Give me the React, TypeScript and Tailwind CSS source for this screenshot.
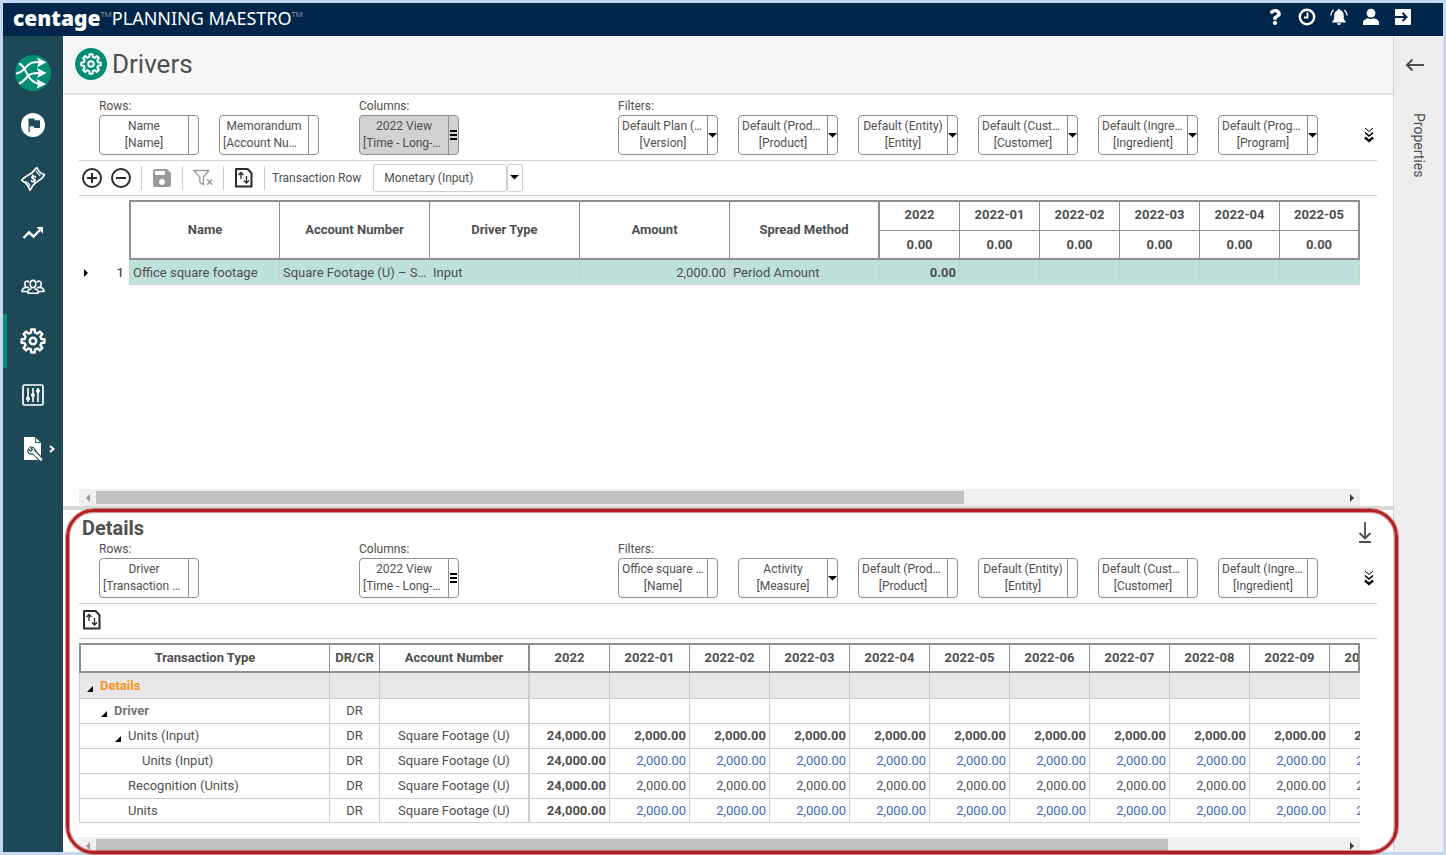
import React from "react";
import { FaQuestion } from "react-icons/fa";
import { MdSave } from "react-icons/md";

function ring(outer: number, inner: number, teeth: number, center: number) {
  const points: string[] = [];
  const step = 360 / teeth;
  for (let i = 0; i < teeth; i++) {
    const base = i * step - 90;
    const corners: [number, number][] = [
      [base - step * 0.3, inner],
      [base - step * 0.2, outer],
      [base + step * 0.2, outer],
      [base + step * 0.3, inner],
    ];
    corners.forEach(([deg, r]) => {
      const a = (deg * Math.PI) / 180;
      points.push(`${(center + r * Math.cos(a)).toFixed(2)} ${(center + r * Math.sin(a)).toFixed(2)}`);
    });
  }
  return `M${points.join("L")}Z`;
}

const gearPath = ring(10.7, 8, 8, 12);

function GearIcon({ className }: { className: string }) {
  return (
    <svg viewBox="0 0 24 24" className={className} fill="none" stroke="currentColor" strokeWidth="2.200" strokeLinejoin="round">
      <path d={gearPath} />
      <circle cx="12" cy="12" r="3" />
    </svg>
  );
}

function ShuffleIcon() {
  return (
    <svg viewBox="0 0 36 36" className="size-9">
      <circle cx="18" cy="18" r="18" fill="#048f74" />
      <g fill="none" stroke="#fff" strokeWidth="2">
        <path d="M4 8.500c5 2 6 7 8.500 11 2.500 5 6 9 13 9.500" />
        <path d="M1 18.500C9 18.500 11 8 19 7.300h7" />
        <path d="M4 28.500c5-1.500 6.500-5.500 10-8.500 3-2.200 7-2 12-2" />
      </g>
      <g fill="#fff">
        <path d="M22 2.500l9.500 4.800-9.500 5 2-5z" />
        <path d="M22 13l9.500 5-9.500 5 2-5z" />
        <path d="M21.500 24l9.500 5.300-9.500 4.200 2-4.500z" />
      </g>
    </svg>
  );
}

function FlagIcon() {
  return (
    <svg viewBox="0 0 24 24" className="size-6">
      <circle cx="12" cy="12" r="12" fill="#fff" />
      <path d="M7.500 5.500h6v1.700h5.500v7.800h-6v-1.700H8.700v6H7.500z" fill="#1d4858" />
    </svg>
  );
}

function BillIcon() {
  return (
    <svg viewBox="0 0 26 26" className="size-[26px]" fill="none" stroke="#fff" strokeWidth="1.700" strokeLinejoin="round" strokeLinecap="round">
      <path d="M1.800 14.500C3.500 9.500 11.500 9.500 15 3.500c.6-1.200 1.300-1.700 2-1.700.8 3 4.300 6 7.400 6.700-1.200 5.500-9.400 6.500-12.400 12.500-.6 1.500-1.400 2.700-2.300 3.200C9 20.500 5.500 16.500 1.800 14.500z" />
      <path d="M16.500 5.500c1 2 2 3 3.500 4M6 15.500c2 1 3.300 2.500 4 4.300" strokeWidth="1.200" />
      <path d="M15.500 11c-1-1.300-3.800-.8-3.700.8.100 1.500 3.300.7 3.500 2.300.2 1.500-2.800 2.300-4 .7M12.600 9.200l2.200 7.200" strokeWidth="1.500" />
    </svg>
  );
}

function TrendIcon() {
  return (
    <svg viewBox="0 0 22 14" className="h-3.5 w-[22px]">
      <path d="M1.500 12l5.500-5.500 4.500 4L18 4" fill="none" stroke="#fff" strokeWidth="2.400" />
      <path d="M14.500 1H21v6.500z" fill="#fff" />
    </svg>
  );
}

function PeopleIcon() {
  return (
    <svg viewBox="0 0 24 16" className="h-4 w-6" fill="none" stroke="#fff" strokeWidth="1.600">
      <ellipse cx="12" cy="5" rx="2.800" ry="3.600" />
      <path d="M6.500 14.300c-.2-3 1.500-4 4-4.800M17.500 14.300c.2-3-1.500-4-4-4.800M6.500 14.300h11" />
      <path d="M8 3.300C6.500 1.300 3.700 2 3.700 4.800c0 1.700.7 2.700 1.600 3.300C2.500 8.800 1 9.800 1 12.500h5M16 3.300c1.500-2 4.300-1.300 4.300 1.500 0 1.700-.7 2.700-1.600 3.300 2.800.7 4.300 1.700 4.300 4.400h-5M5.300 8.100c1 .2 2 .5 2.700 1M18.700 8.100c-1 .2-2 .5-2.700 1" />
    </svg>
  );
}

function SlidersIcon() {
  return (
    <svg viewBox="0 0 22 22" className="size-[22px]" fill="none" stroke="#fff">
      <rect x="1" y="1" width="20" height="20" rx="1.500" strokeWidth="1.700" />
      <path d="M6 4v14M11 4v14M16 4v14" strokeWidth="1.600" />
      <g fill="#fff" stroke="none">
        <circle cx="6" cy="14.500" r="2" />
        <circle cx="11" cy="11" r="2" />
        <circle cx="16" cy="7" r="2" />
      </g>
    </svg>
  );
}

function FileToolIcon() {
  return (
    <svg viewBox="0 0 20 26" className="h-[26px] w-5">
      <path d="M1 1h11l6 6v17H1z" fill="#fff" />
      <path d="M12.500 1.500v5h5" fill="none" stroke="#1d4858" strokeWidth="1" />
      <path d="M10.500 15.500L18 23.500" stroke="#1d4858" strokeWidth="4.800" strokeLinecap="round" />
      <path d="M5.500 13l2.300 2.200 1.700-1.700-2.300-2.300c2.500-.8 5.300 1.200 4.600 4.400-1 3-5 3.500-6.600.9-.5-1-.5-2.500.3-3.500z" fill="#fff" stroke="#1d4858" strokeWidth="1.200" />
      <path d="M10 15.500L18 23.500" stroke="#fff" strokeWidth="2.800" strokeLinecap="round" />
    </svg>
  );
}

function ClockIcon() {
  return (
    <svg viewBox="0 0 18 18" className="size-[18px]" fill="none" stroke="#fff">
      <circle cx="9" cy="9" r="7.200" strokeWidth="2.400" />
      <path d="M9.500 4.500V9.500H6" strokeWidth="1.800" />
    </svg>
  );
}

function BellIcon() {
  return (
    <svg viewBox="0 0 18 18" className="size-[18px]">
      <path d="M9 1c.8 0 1.300.5 1.300 1.200C12.800 2.900 13.700 5 13.700 7.500c0 3.500.6 4.700 2 6v1H2.300v-1c1.400-1.300 2-2.500 2-6 0-2.500.9-4.600 3.400-5.300C7.700 1.500 8.200 1 9 1zM7 15.300h4c0 1-.9 1.700-2 1.700s-2-.7-2-1.700z" fill="#fff" />
      <path d="M3.800 2C2 3.300 1 5 1 7.500M14.200 2C16 3.300 17 5 17 7.500" fill="none" stroke="#fff" strokeWidth="1.300" />
    </svg>
  );
}

function UserIcon() {
  return (
    <svg viewBox="0 0 18 18" className="size-[18px]" fill="#fff">
      <circle cx="9" cy="5.200" r="4.400" />
      <path d="M1 17v-2.500c0-2.300 3-4 5-4.300 1.800 1 4.200 1 6 0 2 .3 5 2 5 4.300V17z" />
    </svg>
  );
}

function ExitIcon() {
  return (
    <svg viewBox="0 0 18 18" className="size-[18px]">
      <rect x="1" y="1" width="16" height="16" rx="1" fill="#fff" />
      <path d="M0 9h12M8.500 5l4 4-4 4" fill="none" stroke="#00254a" strokeWidth="2" />
    </svg>
  );
}

function SwapFileIcon() {
  return (
    <svg viewBox="0 0 20 20" className="size-5" fill="none" stroke="#2b2b2b">
      <path d="M2 1h11.500l4 4V18.500H2z" strokeWidth="2" strokeLinejoin="round" />
      <path d="M7 11V4.500M4.500 7L7 4.500 9.500 7M12.500 8v7M10 12.500l2.500 2.500 2.500-2.500" strokeWidth="1.300" />
    </svg>
  );
}

function CircleIcon({ plus }: { plus: boolean }) {
  return (
    <svg viewBox="0 0 20 20" className="size-5" fill="none" stroke="#2b2b2b" strokeWidth="2">
      <circle cx="10" cy="10" r="9" />
      <path d={plus ? "M5 10h10M10 5v10" : "M5 10h10"} />
    </svg>
  );
}

function ClearFilterIcon() {
  return (
    <svg viewBox="0 0 22 20" className="h-5 w-[22px]" fill="none" stroke="#999">
      <path d="M1 1.700h16.500L11.500 9v8.500L7.500 14.500V9z" strokeWidth="1.500" strokeLinejoin="round" />
      <path d="M15.500 11.500l5.500 6M21 11.500l-5.500 6" strokeWidth="1.600" />
    </svg>
  );
}

function ChevronsIcon() {
  return (
    <svg viewBox="0 0 12 18" className="h-[18px] w-3" fill="none" stroke="#000">
      <path d="M2 2l4 3.500L10 2" strokeWidth="1" />
      <path d="M2 6.500L6 10l4-3.500" strokeWidth="1.600" />
      <path d="M2 11.500L6 15l4-3.500" strokeWidth="2.400" />
    </svg>
  );
}

function Caret() {
  return (
    <svg viewBox="0 0 10 5" className="h-[5px] w-2.5 shrink-0">
      <path d="M0 0h9L4.500 4.500z" fill="#000" />
    </svg>
  );
}

type Handle = "none" | "caret" | "bars";
type Dim = { title: string; field: string; handle: Handle; active?: boolean };

const dim = (title: string, field: string, handle: Handle = "none", active = false): Dim => ({ title, field, handle, active });

function DimLine({ text }: { text: string }) {
  return (
    <span className={`block whitespace-nowrap ${text.endsWith("…") ? "text-left" : "text-center"}`}>{text}</span>
  );
}

function DimBox({ item }: { item: Dim }) {
  return (
    <button
      type="button"
      className={`flex h-10 w-[100px] shrink-0 overflow-hidden rounded border border-[#8f8f8f] text-xs leading-[17px] ${item.active ? "bg-[#d2d2d2]" : "bg-white"}`}
    >
      <span className="flex h-full min-w-0 flex-1 flex-col px-[3px] pt-0.5">
        <DimLine text={item.title} />
        <DimLine text={item.field} />
      </span>
      <span className="flex h-full w-2.5 shrink-0 items-center justify-center border-l border-[#8f8f8f]">
        {item.handle === "caret" && <Caret />}
        {item.handle === "bars" && (
          <span className="flex flex-col gap-0.5">
            <span className="h-0.5 w-[7px] bg-black" />
            <span className="h-0.5 w-[7px] bg-black" />
            <span className="h-0.5 w-[7px] bg-black" />
          </span>
        )}
      </span>
    </button>
  );
}

function DimGroup({ label, items }: { label: string; items: Dim[] }) {
  return (
    <div>
      <div className="h-5 pt-0.5 text-xs leading-[18px]">{label}</div>
      <div className="flex gap-5">
        {items.map((item) => (
          <DimBox key={item.title + item.field} item={item} />
        ))}
      </div>
    </div>
  );
}

function PivotBar({ rows, columns, filters }: { rows: Dim[]; columns: Dim[]; filters: Dim[] }) {
  return (
    <div className="flex items-end border-b border-[#cfcfcf] pr-0.5 pb-[5px] pl-5">
      <div className="grid flex-1 grid-cols-[260px_259px_1fr]">
        <DimGroup label="Rows:" items={rows} />
        <DimGroup label="Columns:" items={columns} />
        <DimGroup label="Filters:" items={filters} />
      </div>
      <button type="button" aria-label="Expand" className="flex h-10 items-center">
        <ChevronsIcon />
      </button>
    </div>
  );
}

function ScrollBar({ thumb, clipped = false }: { thumb: string; clipped?: boolean }) {
  return (
    <div className={`mr-[17px] overflow-hidden bg-[#f0f0f0] ${clipped ? "h-[15px]" : "h-[17px]"}`}>
      <div className="flex h-[17px] items-center">
        <button type="button" aria-label="Scroll left" className="flex h-full w-[17px] items-center justify-center">
          <svg viewBox="0 0 4 8" className="h-2 w-1"><path d="M4 0v8L0 4z" fill="#9a9a9a" /></svg>
        </button>
        <div className="h-[13px] flex-1">
          <div className={`h-full bg-[#c1c1c1] ${thumb}`} />
        </div>
        <button type="button" aria-label="Scroll right" className="flex h-full w-[17px] items-center justify-center">
          <svg viewBox="0 0 4 8" className="h-2 w-1"><path d="M0 0v8l4-4z" fill="#404040" /></svg>
        </button>
      </div>
    </div>
  );
}

const months = ["2022-01", "2022-02", "2022-03", "2022-04", "2022-05"];
const driverColumns = ["Name", "Account Number", "Driver Type", "Amount", "Spread Method"];

function DriversTable() {
  const head = "border-[#8f8f8f] p-0 font-bold";
  const cell = "border-r border-b border-[#cdd3d2] bg-[#bfe1db] px-[3px] pt-px pb-0";
  return (
    <table className="w-[1281px] table-fixed border-separate border-spacing-0 text-[13px] leading-5">
      <colgroup>
        <col className="w-[50px]" />
        <col className="w-[151px]" />
        {driverColumns.slice(1).map((c) => <col key={c} className="w-[150px]" />)}
        {["2022", ...months].map((m) => <col key={m} className="w-20" />)}
      </colgroup>
      <thead>
        <tr className="h-[31px]">
          <td rowSpan={2} />
          {driverColumns.map((c, i) => (
            <th
              key={c}
              rowSpan={2}
              className={`${head} border-t-2 border-b-2 ${i === 0 ? "border-l-2" : ""} ${i === 4 ? "border-r-2" : "border-r"}`}
            >
              {c}
            </th>
          ))}
          {["2022", ...months].map((m, i) => (
            <th key={m} className={`border-[#8f8f8f] px-0 pt-0 pb-0.5 font-bold border-t-2 border-b ${i === 5 ? "border-r-2" : "border-r"}`}>{m}</th>
          ))}
        </tr>
        <tr className="h-[29px]">
          {["2022", ...months].map((m, i) => (
            <th key={m} className={`${head} border-b-2 ${i === 5 ? "border-r-2" : "border-r"}`}>0.00</th>
          ))}
        </tr>
      </thead>
      <tbody>
        <tr className="h-[25px]">
          <td className="p-0">
            <div className="flex items-center justify-between pr-[5px] pl-[5px]">
              <svg viewBox="0 0 4 8" className="h-2 w-1"><path d="M0 0v8l4-4z" fill="#000" /></svg>
              <span className="font-medium">1</span>
            </div>
          </td>
          <td className={`${cell} border-l`}>Office square footage</td>
          <td className={`${cell} whitespace-nowrap`}>Square Footage (U) – S…</td>
          <td className={cell}>Input</td>
          <td className={`${cell} text-right`}>2,000.00</td>
          <td className={cell}>Period Amount</td>
          <td className={`${cell} text-right font-bold`}>0.00</td>
          {months.map((m) => <td key={m} className={cell} />)}
        </tr>
      </tbody>
    </table>
  );
}

const detailPeriods = ["2022-01", "2022-02", "2022-03", "2022-04", "2022-05", "2022-06", "2022-07", "2022-08", "2022-09", "2022-10"];

type DetailRow = {
  label: string;
  indent: string;
  open: boolean;
  labelStyle: string;
  drcr: string;
  account: string;
  total: string;
  value: string;
  valueStyle: string;
  rowStyle: string;
};

const detailRows: DetailRow[] = [
  { label: "Details", indent: "pl-[7px]", open: true, labelStyle: "font-bold text-[#f7941d]", drcr: "", account: "", total: "", value: "", valueStyle: "", rowStyle: "h-[26px] bg-[#e8e8e8]" },
  { label: "Driver", indent: "pl-[21px]", open: true, labelStyle: "font-bold text-[#757575]", drcr: "DR", account: "", total: "", value: "", valueStyle: "", rowStyle: "h-[25px]" },
  { label: "Units (Input)", indent: "pl-[35px]", open: true, labelStyle: "", drcr: "DR", account: "Square Footage (U)", total: "24,000.00", value: "2,000.00", valueStyle: "font-bold", rowStyle: "h-[25px]" },
  { label: "Units (Input)", indent: "pl-[49px]", open: false, labelStyle: "", drcr: "DR", account: "Square Footage (U)", total: "24,000.00", value: "2,000.00", valueStyle: "text-[#3b6cb4]", rowStyle: "h-[25px]" },
  { label: "Recognition (Units)", indent: "pl-[35px]", open: false, labelStyle: "", drcr: "DR", account: "Square Footage (U)", total: "24,000.00", value: "2,000.00", valueStyle: "", rowStyle: "h-[25px]" },
  { label: "Units", indent: "pl-[35px]", open: false, labelStyle: "", drcr: "DR", account: "Square Footage (U)", total: "24,000.00", value: "2,000.00", valueStyle: "text-[#3b6cb4]", rowStyle: "h-6" },
];

function DetailsTable() {
  const head = "border-t-2 border-b-2 border-[#8f8f8f] p-0 font-bold";
  const cell = "border-r border-b border-[#cfcfcf] px-[3px] py-0";
  return (
    <div className="relative mr-[17px] overflow-hidden">
      <table className="w-[1331px] table-fixed border-separate border-spacing-0 text-[13px] leading-5">
        <colgroup>
          <col className="w-[251px]" />
          <col className="w-[50px]" />
          <col className="w-[150px]" />
          {["2022", ...detailPeriods].map((p) => <col key={p} className="w-20" />)}
        </colgroup>
        <thead>
          <tr className="h-[30px]">
            <th className={`${head} border-r border-l-2`}>Transaction Type</th>
            <th className={`${head} border-r`}>DR/CR</th>
            <th className={`${head} border-r-2`}>Account Number</th>
            {["2022", ...detailPeriods].map((p) => <th key={p} className={`${head} border-r`}>{p}</th>)}
          </tr>
        </thead>
        <tbody>
          {detailRows.map((row, i) => (
            <tr key={i} className={row.rowStyle}>
              <td className="border-r border-b border-l border-[#cfcfcf] p-0">
                <div className={`flex items-center gap-[7px] ${row.indent}`}>
                  <span className="flex h-3 w-1.5 items-end">
                    {row.open && (
                      <svg viewBox="0 0 6 6" className="size-1.5"><path d="M6 0v6H0z" fill="#000" /></svg>
                    )}
                  </span>
                  <span className={row.labelStyle}>{row.label}</span>
                </div>
              </td>
              <td className={`${cell} text-center`}>{row.drcr}</td>
              <td className="border-r-2 border-b border-[#cfcfcf] p-0 text-center">{row.account}</td>
              <td className={`${cell} text-right font-bold`}>{row.total}</td>
              {detailPeriods.map((p) => (
                <td key={p} className={`${cell} text-right ${row.valueStyle}`}>{row.value}</td>
              ))}
            </tr>
          ))}
        </tbody>
      </table>
      <span className="absolute top-0 right-0 h-[30px] w-0.5 bg-[#8f8f8f]" />
    </div>
  );
}

function NavItem({ label, active = false, children }: { label: string; active?: boolean; children: React.ReactNode }) {
  return (
    <a
      href="#"
      aria-label={label}
      className={`flex h-[54px] items-center justify-center border-l-4 pr-1 text-white ${active ? "border-[#048f74]" : "border-transparent"}`}
    >
      {children}
    </a>
  );
}

function Divider() {
  return <span className="h-6 w-px bg-[#cfcfcf]" />;
}

export default function App() {
  return (
    <div className="flex min-h-screen flex-col border-[3px] border-[#c6d8f0] bg-white font-['Roboto',sans-serif] text-[#4f4f4f]">
      <header className="flex h-[33px] items-center justify-between bg-[#00254a] pr-[31px] pb-1 pl-2.5 text-white">
        <div className="flex items-center font-['Noto_Sans',sans-serif] whitespace-nowrap">
          <span className="text-[21px] leading-7 font-black">centage</span>
          <sup className="text-[8px] font-light opacity-70">TM</sup>
          <span className="text-lg leading-7">PLANNING MAESTRO</span>
          <sup className="text-[8px] font-light opacity-70">TM</sup>
        </div>
        <nav className="flex items-center gap-3.5 pb-0.5">
          <button type="button" aria-label="Help" className="flex w-[18px] justify-center"><FaQuestion className="size-4" /></button>
          <button type="button" aria-label="History"><ClockIcon /></button>
          <button type="button" aria-label="Notifications"><BellIcon /></button>
          <button type="button" aria-label="Account"><UserIcon /></button>
          <button type="button" aria-label="Sign out"><ExitIcon /></button>
        </nav>
      </header>

      <div className="flex flex-1">
        <aside className="w-[60px] shrink-0 bg-[#1d4858] pt-2">
          <div className="pt-0.5">
            <NavItem label="Home"><ShuffleIcon /></NavItem>
          </div>
          <div className="-mt-0.5">
            <NavItem label="Milestones"><FlagIcon /></NavItem>
            <NavItem label="Revenue"><BillIcon /></NavItem>
            <NavItem label="Trends"><TrendIcon /></NavItem>
            <NavItem label="Personnel"><PeopleIcon /></NavItem>
            <NavItem label="Drivers" active><GearIcon className="size-[26px]" /></NavItem>
            <NavItem label="Adjustments"><SlidersIcon /></NavItem>
            <NavItem label="Setup">
              <span className="flex items-center gap-1.5 pl-3">
                <FileToolIcon />
                <svg viewBox="0 0 6 8" className="h-2 w-1.5" fill="none" stroke="#fff" strokeWidth="2"><path d="M1 1l3.500 3L1 7" /></svg>
              </span>
            </NavItem>
          </div>
        </aside>

        <main className="flex min-w-0 flex-1 flex-col">
          <div className="flex h-[59px] items-center gap-[5px] border-b-2 border-[#e4e6e6] bg-[#f5f7f7] pb-0.5 pl-3">
            <span className="flex size-8 items-center justify-center rounded-full bg-[#048f74] text-white">
              <GearIcon className="size-[22px]" />
            </span>
            <h1 className="text-[26px] leading-8">Drivers</h1>
          </div>

          <section className="flex flex-1 flex-col px-4">
            <PivotBar
              rows={[dim("Name", "[Name]"), dim("Memorandum", "[Account Nu…")]}
              columns={[dim("2022 View", "[Time - Long-…", "bars", true)]}
              filters={[
                dim("Default Plan (…", "[Version]", "caret"),
                dim("Default (Prod…", "[Product]", "caret"),
                dim("Default (Entity)", "[Entity]", "caret"),
                dim("Default (Cust…", "[Customer]", "caret"),
                dim("Default (Ingre…", "[Ingredient]", "caret"),
                dim("Default (Prog…", "[Program]", "caret"),
              ]}
            />
            <div className="flex h-[35px] items-center border-b border-[#cfcfcf] pb-px pl-[3px]">
              <div className="flex items-center gap-2.5">
                <div className="flex gap-[9px]">
                  <button type="button" aria-label="Add"><CircleIcon plus /></button>
                  <button type="button" aria-label="Remove"><CircleIcon plus={false} /></button>
                </div>
                <Divider />
                <button type="button" aria-label="Save" className="flex w-5 justify-center text-[#999]"><MdSave className="size-6 shrink-0" /></button>
                <Divider />
                <button type="button" aria-label="Clear filter" className="flex w-5 justify-center"><ClearFilterIcon /></button>
                <Divider />
                <button type="button" aria-label="Export"><SwapFileIcon /></button>
                <Divider />
              </div>
              <label htmlFor="transaction-row" className="pr-3 pl-[7px] text-xs">Transaction Row</label>
              <select id="transaction-row" className="h-7 w-[134px] appearance-none rounded-[3px] border border-[#cfcfcf] bg-white pl-2.5 text-xs">
                <option>Monetary (Input)</option>
              </select>
              <span className="flex h-7 w-4 items-center justify-center rounded-[3px] border border-[#cfcfcf]"><Caret /></span>
            </div>
            <div className="mt-1 overflow-hidden">
              <DriversTable />
            </div>
            <div className="mt-auto">
              <ScrollBar thumb="w-[69.6%]" />
            </div>
          </section>

          <section className="relative border-t-4 border-[#d9d9d9] px-4">
            <div className="flex h-7 items-start justify-between pt-2 pr-0.5 pl-[3px]">
              <h2 className="text-xl leading-5 font-bold">Details</h2>
              <button type="button" aria-label="Collapse details" className="pt-[3px]">
                <svg viewBox="0 0 20 24" className="h-6 w-5" fill="none" stroke="#4f4f4f" strokeWidth="1.800">
                  <path d="M10 1v16M4.500 12l5.500 5.500 5.500-5.500M4 21h12" />
                </svg>
              </button>
            </div>
            <PivotBar
              rows={[dim("Driver", "[Transaction …")]}
              columns={[dim("2022 View", "[Time - Long-…", "bars")]}
              filters={[
                dim("Office square …", "[Name]"),
                dim("Activity", "[Measure]", "caret"),
                dim("Default (Prod…", "[Product]"),
                dim("Default (Entity)", "[Entity]"),
                dim("Default (Cust…", "[Customer]"),
                dim("Default (Ingre…", "[Ingredient]"),
              ]}
            />
            <div className="flex h-[35px] items-center border-b border-[#cfcfcf] pb-0.5 pl-[3px]">
              <button type="button" aria-label="Export details"><SwapFileIcon /></button>
            </div>
            <div className="mt-1">
              <DetailsTable />
            </div>
            <div className="mt-3.5">
              <ScrollBar thumb="w-[86%]" clipped />
            </div>
            <div className="pointer-events-none absolute -top-px -right-[5px] -bottom-0.5 left-[3px] z-10 rounded-[28px] border-[3px] border-[#b01f24] shadow-[0_0_0_1px_rgba(176,31,36,0.5),inset_0_0_0_1px_rgba(176,31,36,0.5)]" />
          </section>
        </main>

        <aside className="flex w-[50px] shrink-0 flex-col items-center border-l border-[#d6d6d6] bg-[#eeeeee] pt-5">
          <button type="button" aria-label="Open properties" className="mr-2">
            <svg viewBox="0 0 20 18" className="h-[18px] w-5" fill="none" stroke="#4f4f4f" strokeWidth="2">
              <path d="M19 9H2M7.500 3.500L2 9l5.500 5.500" />
            </svg>
          </button>
          <span className="mt-[39px] text-sm leading-5 [writing-mode:vertical-rl]">Properties</span>
        </aside>
      </div>
    </div>
  );
}
